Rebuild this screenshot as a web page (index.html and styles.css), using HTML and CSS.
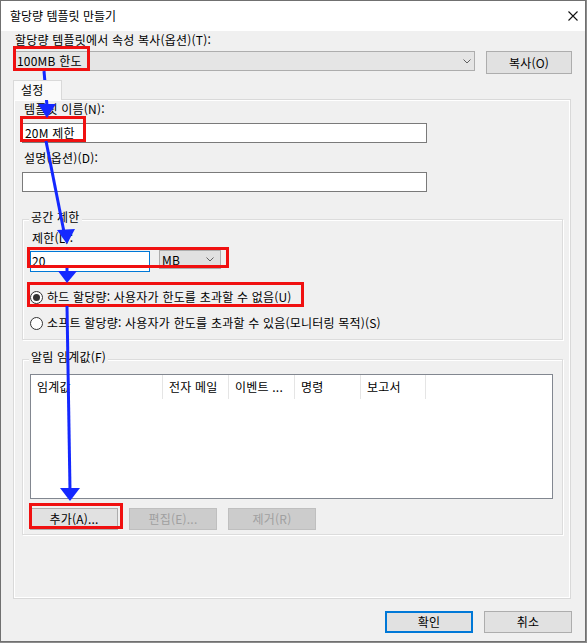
FILE: index.html
```html
<!DOCTYPE html>
<html lang="ko">
<head>
<meta charset="utf-8">
<link rel="stylesheet" href="styles.css">
</head>
<body>
<div class="window">
  <div class="titlebar">
    <span class="title">할당량 템플릿 만들기</span>
    <svg class="close" width="10" height="10" viewBox="0 0 10 10"><path d="M0.5 0.5L9.5 9.5M9.5 0.5L0.5 9.5" stroke="#111" stroke-width="1.1" fill="none"/></svg>
  </div>
  <div class="content">
    <div class="lbl top-lbl">할당량 템플릿에서 속성 복사(옵션)(T):</div>
    <div class="copy-row">
      <div class="combo wide"><span>100MB 한도</span><svg width="8" height="5" viewBox="0 0 8 5"><path d="M0.5 0.5L4 4L7.5 0.5" stroke="#606060" fill="none"/></svg></div>
      <div class="btn copy">복사(O)</div>
    </div>
    <div class="tabs">
      <div class="tab">설정</div>
      <div class="panel">
        <div class="lbl field-lbl first">템플릿 이름(N):</div>
        <div class="input name">20M 제한</div>
        <div class="lbl field-lbl second">설명(옵션)(D):</div>
        <div class="input desc"></div>

        <div class="group space">
          <div class="group-title">공간 제한</div>
          <div class="lbl limit-lbl">제한(L):</div>
          <div class="limit-row">
            <div class="input limit">20</div>
            <div class="combo unit"><span>MB</span><svg width="8" height="5" viewBox="0 0 8 5"><path d="M0.5 0.5L4 4L7.5 0.5" stroke="#606060" fill="none"/></svg></div>
          </div>
          <div class="radio-row r1"><span class="radio checked"></span><span>하드 할당량: 사용자가 한도를 초과할 수 없음(U)</span></div>
          <div class="radio-row r2"><span class="radio"></span><span>소프트 할당량: 사용자가 한도를 초과할 수 있음(모니터링 목적)(S)</span></div>
        </div>

        <div class="group alert">
          <div class="group-title">알림 임계값(F)</div>
          <div class="listview">
            <div class="lv-head">
              <div class="col c1">임계값</div>
              <div class="col c2">전자 메일</div>
              <div class="col c3">이벤트 ...</div>
              <div class="col c4">명령</div>
              <div class="col c5">보고서</div>
            </div>
          </div>
          <div class="btn-row">
            <div class="btn small">추가(A)...</div>
            <div class="btn small disabled">편집(E)...</div>
            <div class="btn small disabled">제거(R)</div>
          </div>
        </div>
      </div>
    </div>
    <div class="footer">
      <div class="btn foot default">확인</div>
      <div class="btn foot">취소</div>
    </div>
  </div>
</div>
<svg class="annot" width="587" height="643" viewBox="0 0 587 643">
  <g fill="none" stroke="#f01010" stroke-width="3">
    <rect x="14.5" y="47.5" width="74" height="22"/>
    <rect x="21.5" y="117.5" width="63" height="23"/>
    <rect x="28.5" y="248.5" width="199" height="18"/>
    <rect x="28.5" y="283.5" width="274" height="22"/>
    <rect x="30.5" y="504.5" width="91" height="23"/>
  </g>
  <g stroke="#1428ff" stroke-width="3" fill="none">
    <path d="M44 71L47 106"/>
    <path d="M46 141L64 232"/>
    <path d="M67 268L67 272"/>
    <path d="M67 306L70 490"/>
  </g>
  <g fill="#1428ff">
    <polygon points="38,104 56,104 47,118"/>
    <polygon points="57,230 75,229 67,244"/>
    <polygon points="58,271 77,271 67,283"/>
    <polygon points="60,488 80,488 70,501"/>
  </g>
</svg>
</body>
</html>
```
FILE: styles.css
```css
html, body {
  margin: 0;
  padding: 0;
}
body {
  background: #8c8c8c;
  font-family: "Noto Sans CJK KR", "Noto Sans", sans-serif;
  font-size: 12px;
  letter-spacing: 0.2px;
  color: #000;
  position: relative;
  width: 587px;
  height: 643px;
  overflow: hidden;
}
.window {
  width: 586px;
  height: 642px;
  box-sizing: border-box;
  border: 1px solid #707070;
  background: #f0f0f0;
  display: flex;
  flex-direction: column;
}
.titlebar {
  height: 30px;
  flex: none;
  background: #fff;
  display: flex;
  align-items: center;
  justify-content: space-between;
  padding: 0 7px 0 9px;
}
.title {
  line-height: 14px;
  letter-spacing: 0;
}
.content {
  flex: 1;
  padding: 2px 13px 0 13px;
}
.lbl {
  line-height: 14px;
  height: 14px;
  white-space: nowrap;
}
.top-lbl {
  padding-left: 1px;
}
.copy-row {
  display: flex;
  gap: 11px;
  margin-top: 4px;
  align-items: flex-start;
}
.combo {
  box-sizing: border-box;
  border: 1px solid #adadad;
  background: #e5e5e5;
  display: flex;
  align-items: center;
  justify-content: space-between;
  line-height: 14px;
}
.combo.wide {
  width: 461px;
  height: 20px;
  padding: 0 3px 0 2px;
}
.btn {
  box-sizing: border-box;
  border: 1px solid #adadad;
  background: #e1e1e1;
  display: flex;
  align-items: center;
  justify-content: center;
  line-height: 14px;
  white-space: nowrap;
}
.btn.copy {
  width: 86px;
  height: 23px;
}
.tabs {
  margin-top: 6px;
  margin-left: -1px;
  display: flex;
  flex-direction: column;
}
.tab {
  position: relative;
  z-index: 1;
  width: 49px;
  height: 20px;
  box-sizing: border-box;
  border: 1px solid #d9d9d9;
  border-bottom: none;
  background: #fafafa;
  padding-left: 7px;
  line-height: 18px;
  margin-bottom: -1px;
}
.panel {
  width: 558px;
  height: 500px;
  box-sizing: border-box;
  border: 1px solid #d9d9d9;
  box-shadow: inset 1px 1px 0 #fff, inset -1px -1px 0 #fff;
  padding: 1px 0 0 8px;
}
.field-lbl {
  padding-left: 2px;
}
.field-lbl.first {
  margin-top: 1px;
}
.field-lbl.second {
  margin-top: 8px;
}
.input {
  box-sizing: border-box;
  background: #fff;
  border: 1px solid #7a7a7a;
  line-height: 18px;
  white-space: nowrap;
}
.input.name {
  width: 405px;
  height: 20px;
  margin-top: 7px;
  padding-left: 2px;
}
.input.desc {
  width: 405px;
  height: 20px;
  margin-top: 7px;
}
.group {
  box-sizing: border-box;
  width: 541px;
  border: 1px solid #dcdcdc;
  box-shadow: inset 1px 1px 0 #fff, 1px 1px 0 #fff;
}
.group.space {
  margin-top: 27px;
  height: 121px;
}
.group.alert {
  margin-top: 19px;
  height: 176px;
}
.group-title {
  margin: -10px 0 0 6px;
  padding: 0 2px;
  width: fit-content;
  background: #f0f0f0;
  line-height: 14px;
  height: 14px;
  white-space: nowrap;
}
.limit-lbl {
  margin-top: 7px;
  padding-left: 9px;
}
.limit-row {
  display: flex;
  gap: 9px;
  margin: 6px 0 0 7px;
  align-items: flex-start;
}
.input.limit {
  width: 120px;
  height: 21px;
  border-color: #0078d7;
  padding-left: 1px;
}
.combo.unit {
  width: 62px;
  height: 19px;
  margin-top: -1px;
  background: #e1e1e1;
  padding: 0 6px 0 2px;
}
.radio-row {
  display: flex;
  align-items: center;
  gap: 4px;
  margin-left: 7px;
  line-height: 14px;
  height: 14px;
  white-space: nowrap;
}
.radio-row.r1 {
  margin-top: 18px;
}
.radio-row.r2 {
  margin-top: 12px;
}
.radio {
  width: 13px;
  height: 13px;
  box-sizing: border-box;
  border: 1px solid #333;
  border-radius: 50%;
  background: #fff;
  display: flex;
  align-items: center;
  justify-content: center;
  flex: none;
}
.radio.checked::after {
  content: "";
  width: 7px;
  height: 7px;
  border-radius: 50%;
  background: #333;
}
.listview {
  box-sizing: border-box;
  width: 523px;
  height: 125px;
  margin: 10px 0 0 7px;
  border: 1px solid #828790;
  background: #fff;
}
.lv-head {
  display: flex;
  height: 24px;
}
.col {
  box-sizing: border-box;
  border-right: 1px solid #e5e5e5;
  padding-left: 6px;
  line-height: 24px;
  white-space: nowrap;
}
.c1 { width: 132px; }
.c2 { width: 66px; }
.c3 { width: 66px; }
.c4 { width: 66px; }
.c5 { width: 65px; }
.btn-row {
  display: flex;
  gap: 11px;
  margin: 9px 0 0 7px;
}
.btn.small {
  width: 88px;
  height: 22px;
}
.btn.disabled {
  background: #cccccc;
  border-color: #bfbfbf;
  color: #a0a0a0;
}
.footer {
  display: flex;
  justify-content: flex-end;
  gap: 11px;
  margin-top: 12px;
}
.btn.foot {
  width: 88px;
  height: 22px;
}
.btn.default {
  border-color: #0078d7;
  box-shadow: inset 0 0 0 1px #0078d7;
}
.annot {
  position: absolute;
  left: 0;
  top: 0;
  pointer-events: none;
}
```
